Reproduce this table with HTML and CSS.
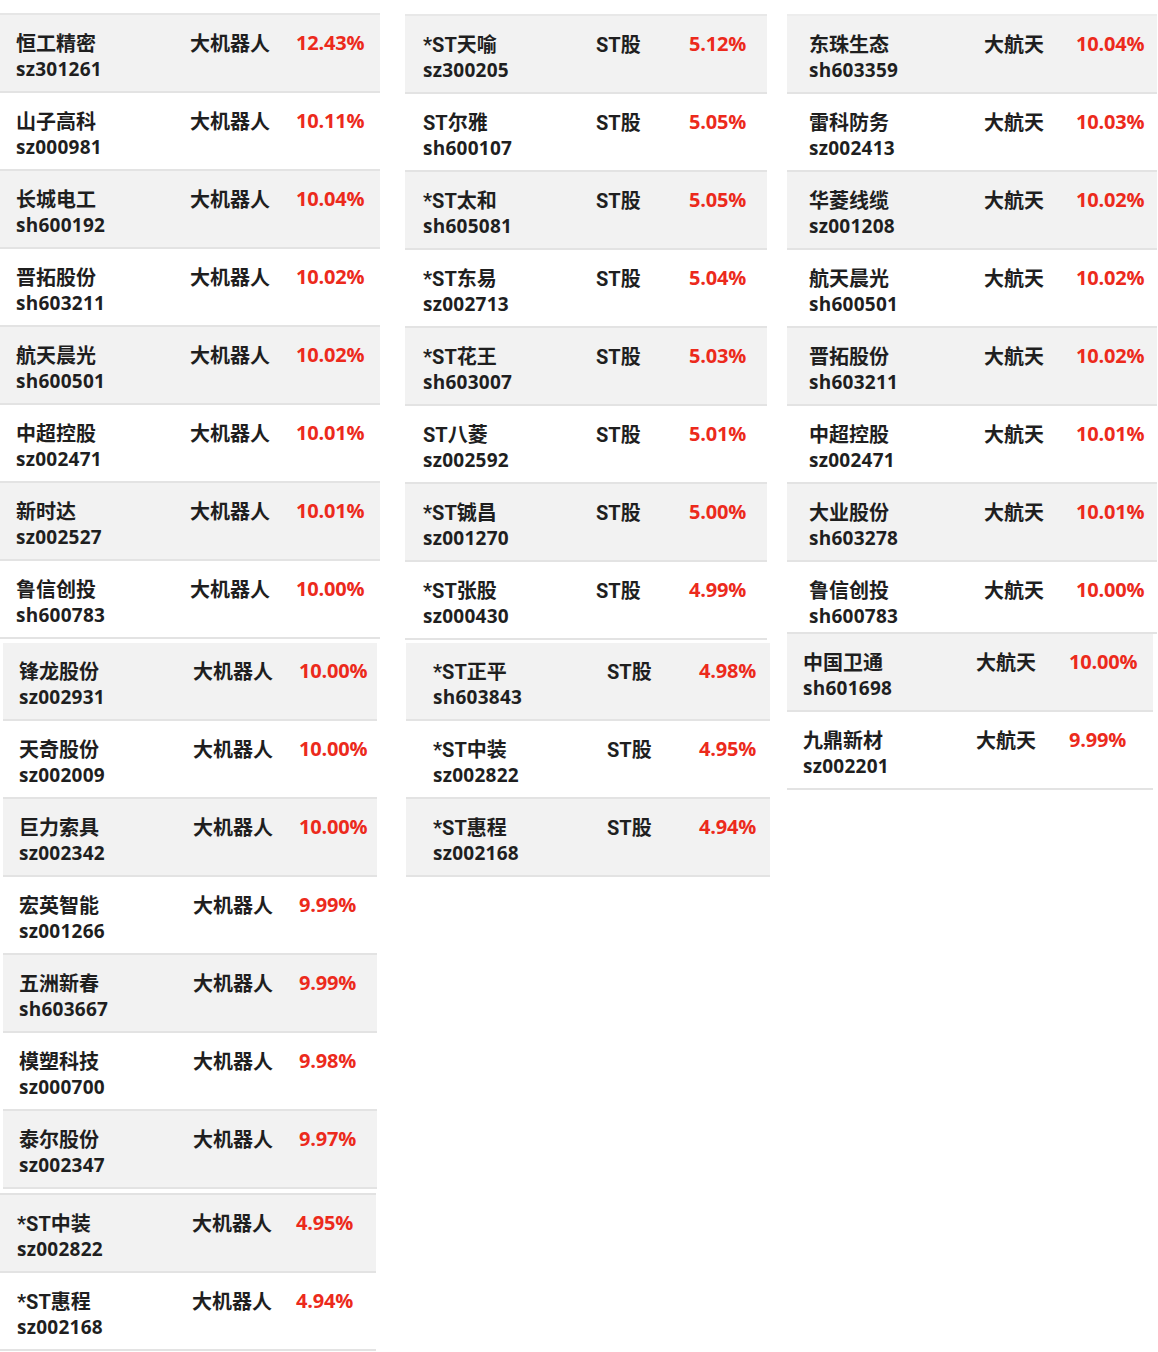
FILE: index.html
```html
<!DOCTYPE html>
<html lang="zh-CN">
<head>
<meta charset="utf-8">
<title>涨幅榜</title>
<link rel="stylesheet" href="styles.css">
</head>
<body>
<div class="board">
  <div class="col col-1">
    <div class="seg seg-1a">
      <div class="row gray"><div class="name"><div class="nm">恒工精密</div><div class="code">sz301261</div></div><div class="sector">大机器人</div><div class="pct">12.43%</div></div>
      <div class="row"><div class="name"><div class="nm">山子高科</div><div class="code">sz000981</div></div><div class="sector">大机器人</div><div class="pct">10.11%</div></div>
      <div class="row gray"><div class="name"><div class="nm">长城电工</div><div class="code">sh600192</div></div><div class="sector">大机器人</div><div class="pct">10.04%</div></div>
      <div class="row"><div class="name"><div class="nm">晋拓股份</div><div class="code">sh603211</div></div><div class="sector">大机器人</div><div class="pct">10.02%</div></div>
      <div class="row gray"><div class="name"><div class="nm">航天晨光</div><div class="code">sh600501</div></div><div class="sector">大机器人</div><div class="pct">10.02%</div></div>
      <div class="row"><div class="name"><div class="nm">中超控股</div><div class="code">sz002471</div></div><div class="sector">大机器人</div><div class="pct">10.01%</div></div>
      <div class="row gray"><div class="name"><div class="nm">新时达</div><div class="code">sz002527</div></div><div class="sector">大机器人</div><div class="pct">10.01%</div></div>
      <div class="row"><div class="name"><div class="nm">鲁信创投</div><div class="code">sh600783</div></div><div class="sector">大机器人</div><div class="pct">10.00%</div></div>
    </div>
    <div class="seg seg-1b">
      <div class="row gray"><div class="name"><div class="nm">锋龙股份</div><div class="code">sz002931</div></div><div class="sector">大机器人</div><div class="pct">10.00%</div></div>
      <div class="row"><div class="name"><div class="nm">天奇股份</div><div class="code">sz002009</div></div><div class="sector">大机器人</div><div class="pct">10.00%</div></div>
      <div class="row gray"><div class="name"><div class="nm">巨力索具</div><div class="code">sz002342</div></div><div class="sector">大机器人</div><div class="pct">10.00%</div></div>
      <div class="row"><div class="name"><div class="nm">宏英智能</div><div class="code">sz001266</div></div><div class="sector">大机器人</div><div class="pct">9.99%</div></div>
      <div class="row gray"><div class="name"><div class="nm">五洲新春</div><div class="code">sh603667</div></div><div class="sector">大机器人</div><div class="pct">9.99%</div></div>
      <div class="row"><div class="name"><div class="nm">模塑科技</div><div class="code">sz000700</div></div><div class="sector">大机器人</div><div class="pct">9.98%</div></div>
      <div class="row gray"><div class="name"><div class="nm">泰尔股份</div><div class="code">sz002347</div></div><div class="sector">大机器人</div><div class="pct">9.97%</div></div>
    </div>
    <div class="seg seg-1c">
      <div class="row gray"><div class="name"><div class="nm">*ST中装</div><div class="code">sz002822</div></div><div class="sector">大机器人</div><div class="pct">4.95%</div></div>
      <div class="row"><div class="name"><div class="nm">*ST惠程</div><div class="code">sz002168</div></div><div class="sector">大机器人</div><div class="pct">4.94%</div></div>
    </div>
  </div>

  <div class="col col-2">
    <div class="seg seg-2a">
      <div class="row gray"><div class="name"><div class="nm">*ST天喻</div><div class="code">sz300205</div></div><div class="sector">ST股</div><div class="pct">5.12%</div></div>
      <div class="row"><div class="name"><div class="nm">ST尔雅</div><div class="code">sh600107</div></div><div class="sector">ST股</div><div class="pct">5.05%</div></div>
      <div class="row gray"><div class="name"><div class="nm">*ST太和</div><div class="code">sh605081</div></div><div class="sector">ST股</div><div class="pct">5.05%</div></div>
      <div class="row"><div class="name"><div class="nm">*ST东易</div><div class="code">sz002713</div></div><div class="sector">ST股</div><div class="pct">5.04%</div></div>
      <div class="row gray"><div class="name"><div class="nm">*ST花王</div><div class="code">sh603007</div></div><div class="sector">ST股</div><div class="pct">5.03%</div></div>
      <div class="row"><div class="name"><div class="nm">ST八菱</div><div class="code">sz002592</div></div><div class="sector">ST股</div><div class="pct">5.01%</div></div>
      <div class="row gray"><div class="name"><div class="nm">*ST铖昌</div><div class="code">sz001270</div></div><div class="sector">ST股</div><div class="pct">5.00%</div></div>
      <div class="row"><div class="name"><div class="nm">*ST张股</div><div class="code">sz000430</div></div><div class="sector">ST股</div><div class="pct">4.99%</div></div>
    </div>
    <div class="seg seg-2b">
      <div class="row gray"><div class="name"><div class="nm">*ST正平</div><div class="code">sh603843</div></div><div class="sector">ST股</div><div class="pct">4.98%</div></div>
      <div class="row"><div class="name"><div class="nm">*ST中装</div><div class="code">sz002822</div></div><div class="sector">ST股</div><div class="pct">4.95%</div></div>
      <div class="row gray"><div class="name"><div class="nm">*ST惠程</div><div class="code">sz002168</div></div><div class="sector">ST股</div><div class="pct">4.94%</div></div>
    </div>
  </div>

  <div class="col col-3">
    <div class="seg seg-3a">
      <div class="row gray"><div class="name"><div class="nm">东珠生态</div><div class="code">sh603359</div></div><div class="sector">大航天</div><div class="pct">10.04%</div></div>
      <div class="row"><div class="name"><div class="nm">雷科防务</div><div class="code">sz002413</div></div><div class="sector">大航天</div><div class="pct">10.03%</div></div>
      <div class="row gray"><div class="name"><div class="nm">华菱线缆</div><div class="code">sz001208</div></div><div class="sector">大航天</div><div class="pct">10.02%</div></div>
      <div class="row"><div class="name"><div class="nm">航天晨光</div><div class="code">sh600501</div></div><div class="sector">大航天</div><div class="pct">10.02%</div></div>
      <div class="row gray"><div class="name"><div class="nm">晋拓股份</div><div class="code">sh603211</div></div><div class="sector">大航天</div><div class="pct">10.02%</div></div>
      <div class="row"><div class="name"><div class="nm">中超控股</div><div class="code">sz002471</div></div><div class="sector">大航天</div><div class="pct">10.01%</div></div>
      <div class="row gray"><div class="name"><div class="nm">大业股份</div><div class="code">sh603278</div></div><div class="sector">大航天</div><div class="pct">10.01%</div></div>
      <div class="row row-short"><div class="name"><div class="nm">鲁信创投</div><div class="code">sh600783</div></div><div class="sector">大航天</div><div class="pct">10.00%</div></div>
    </div>
    <div class="seg seg-3b">
      <div class="row gray"><div class="name"><div class="nm">中国卫通</div><div class="code">sh601698</div></div><div class="sector">大航天</div><div class="pct">10.00%</div></div>
      <div class="row"><div class="name"><div class="nm">九鼎新材</div><div class="code">sz002201</div></div><div class="sector">大航天</div><div class="pct">9.99%</div></div>
    </div>
  </div>
</div>
</body>
</html>
```

FILE: styles.css
```css
html, body {
  margin: 0;
  padding: 0;
  background: #ffffff;
}

body {
  width: 1158px;
  height: 1352px;
  overflow: hidden;
  font-family: Roboto, "Noto Sans CJK SC", sans-serif;
  font-weight: 700;
  font-size: 20px;
  color: #1f1f1f;
}

.board {
  display: flex;
  align-items: flex-start;
}

.col {
  display: flex;
  flex-direction: column;
  align-items: flex-start;
}

.col-1 { width: 380px; }
.col-2 { width: 365px; margin-left: 25px; }
.col-3 { width: 371px; margin-left: 17px; }

.seg {
  --pad: 16px;
  --c1: 174px;
  --c2: 106px;
  display: flex;
  flex-direction: column;
}

.seg-1a { width: 380px; margin-top: 13px; border-top: 2px solid #e6e6e6; }
.seg-1b { width: 374px; margin-left: 3px; margin-top: 4px; }
.seg-1c { width: 376px; margin-top: 4px; border-top: 2px solid #e2e2e2; --pad: 17px; --c1: 175px; --c2: 104px; }

.seg-2a { width: 362px; margin-top: 14px; border-top: 2px solid #e8e8e8; --pad: 18px; --c1: 173px; --c2: 93px; }
.seg-2b { width: 364px; margin-left: 1px; margin-top: 3px; --pad: 27px; --c1: 174px; --c2: 92px; }

.seg-3a { width: 370px; margin-top: 14px; border-top: 2px solid #ededed; --pad: 22px; --c1: 175px; --c2: 92px; }
.seg-3b { width: 366px; --pad: 16px; --c1: 173px; --c2: 93px; }

.row {
  display: grid;
  grid-template-columns: var(--c1) var(--c2) 1fr;
  align-items: start;
  box-sizing: border-box;
  height: 78px;
  padding: 16px 0 0 var(--pad);
  border-bottom: 2px solid #e3e3e3;
  white-space: nowrap;
}

.row.gray {
  background: #f2f2f2;
}

.row-short {
  height: 72px;
}

.nm,
.sector {
  line-height: 26px;
}

.code {
  font-family: "Open Sans", "Noto Sans CJK SC", sans-serif;
  font-size: 19px;
  line-height: 25px;
  letter-spacing: 0.25px;
}

.pct {
  font-family: "Open Sans", "Noto Sans CJK SC", sans-serif;
  line-height: 24px;
  letter-spacing: -0.2px;
  color: #ec2a1c;
}
```
